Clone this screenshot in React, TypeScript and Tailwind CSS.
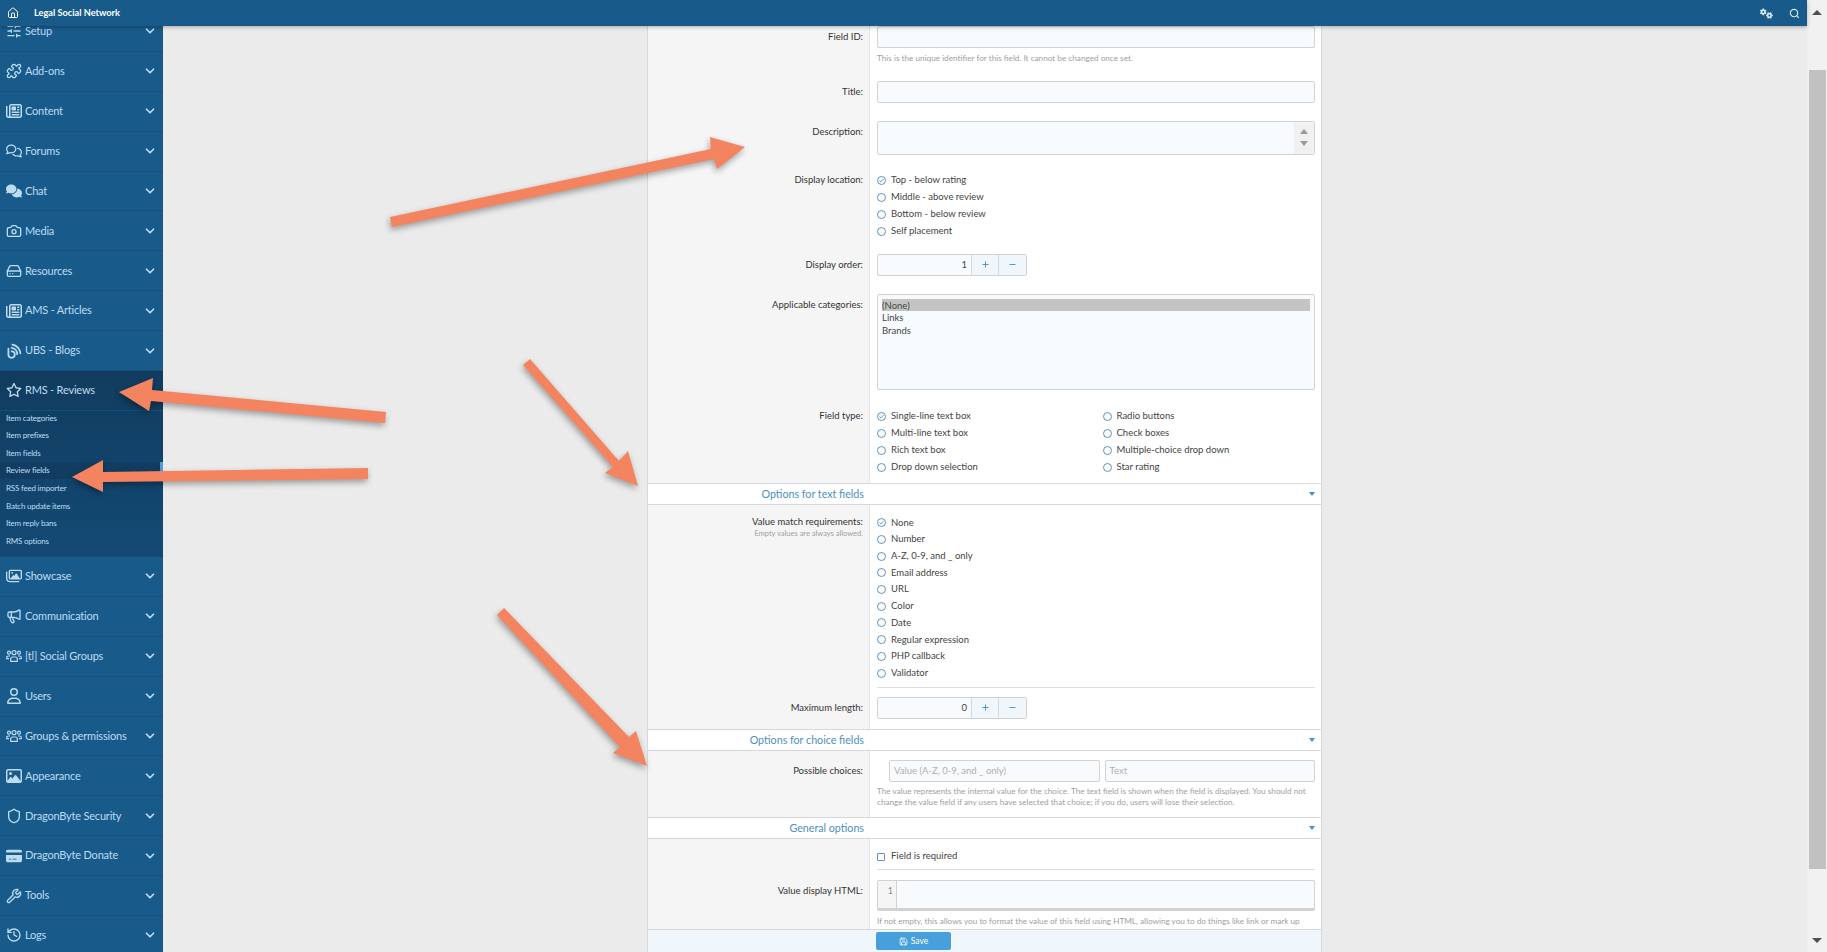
import type { ReactNode } from 'react';
import {
  Camera, ChevronDown, HardDrive, History, House, Megaphone, Plus, Minus, Puzzle, Save, Search, Shield, SlidersHorizontal, Wrench,
} from 'lucide-react';
import { FaComments, FaGears, FaCreditCard, FaRegComments, FaRegImage, FaRegImages, FaRegNewspaper, FaRegStar, FaRegUser } from 'react-icons/fa6';

function GroupIcon({ className }: { className?: string }) {
  return (
    <svg viewBox="0 0 24 20" className={className} fill="none" stroke="currentColor" strokeWidth="1.8">
      <circle cx="12" cy="5" r="3" />
      <circle cx="4.5" cy="5" r="2.2" />
      <circle cx="19.5" cy="5" r="2.2" />
      <path d="M7 18v-3.5a3 3 0 0 1 3-3h4a3 3 0 0 1 3 3V18z" />
      <path d="M4.5 14H1v-1.5A2.5 2.5 0 0 1 3.5 10H6M19.5 14H23v-1.5A2.5 2.5 0 0 0 20.5 10H18" />
    </svg>
  );
}

function BlogIcon({ className }: { className?: string }) {
  return (
    <svg viewBox="0 0 20 20" className={className} fill="none" stroke="currentColor" strokeWidth="2.2" strokeLinecap="round">
      <path d="M3 7v7.5a4 4 0 1 0 4-4" />
      <path d="M7 6a8 8 0 0 1 7 8" />
      <path d="M8 2a12 12 0 0 1 10 11" />
    </svg>
  );
}

const iconCls = 'w-[16px] h-[16px]';

const topItems: { label: string; icon: ReactNode }[] = [
  { label: 'Setup', icon: <SlidersHorizontal className={iconCls} /> },
  { label: 'Add-ons', icon: <Puzzle className={iconCls} /> },
  { label: 'Content', icon: <FaRegNewspaper className={iconCls} /> },
  { label: 'Forums', icon: <FaRegComments className={iconCls} /> },
  { label: 'Chat', icon: <FaComments className={iconCls} /> },
  { label: 'Media', icon: <Camera className={iconCls} /> },
  { label: 'Resources', icon: <HardDrive className={iconCls} /> },
  { label: 'AMS - Articles', icon: <FaRegNewspaper className={iconCls} /> },
  { label: 'UBS - Blogs', icon: <BlogIcon className={iconCls} /> },
];

const bottomItems: { label: string; icon: ReactNode }[] = [
  { label: 'Showcase', icon: <FaRegImages className={iconCls} /> },
  { label: 'Communication', icon: <Megaphone className={iconCls} /> },
  { label: '[tl] Social Groups', icon: <GroupIcon className={iconCls} /> },
  { label: 'Users', icon: <FaRegUser className={iconCls} /> },
  { label: 'Groups & permissions', icon: <GroupIcon className={iconCls} /> },
  { label: 'Appearance', icon: <FaRegImage className={iconCls} /> },
  { label: 'DragonByte Security', icon: <Shield className={iconCls} /> },
  { label: 'DragonByte Donate', icon: <FaCreditCard className={iconCls} /> },
  { label: 'Tools', icon: <Wrench className={iconCls} /> },
  { label: 'Logs', icon: <History className={iconCls} /> },
];

const subItems = ['Item categories', 'Item prefixes', 'Item fields', 'Review fields', 'RSS feed importer', 'Batch update items', 'Item reply bans', 'RMS options'];
const matchTypes = ['Number', 'A-Z, 0-9, and _ only', 'Email address', 'URL', 'Color', 'Date', 'Regular expression', 'PHP callback', 'Validator'];

function NavRow({ label, icon, chevron = true }: { label: string; icon: ReactNode; chevron?: boolean }) {
  return (
    <div className="h-[39.9px] shrink-0 flex items-center pl-[6px] pr-[6px] border-b border-[#14507c] text-[#bcdcf2]">
      <span className="w-[16px] flex justify-center">{icon}</span>
      <span className="ml-[3px] flex-1 text-[11px] tracking-[-0.2px] whitespace-nowrap">{label}</span>
      {chevron && <ChevronDown className="w-[14px] h-[14px]" strokeWidth={3} />}
    </div>
  );
}

function Sidebar() {
  return (
    <nav className="w-[163px] shrink-0 bg-[#185b8b] overflow-hidden">
      <div className="mt-[-14px] flex flex-col">
        {topItems.map(i => <NavRow key={i.label} {...i} />)}
        <div className="h-[186px] shrink-0 bg-gradient-to-b from-[#113c5f] to-[#134a75]">
          <NavRow label="RMS - Reviews" icon={<FaRegStar className={iconCls} />} chevron={false} />
          <div className="mt-[-2px]">
            {subItems.map(s => (
              <div key={s} className={`relative h-[17.6px] flex items-center pl-[6px] text-[8px] tracking-[-0.2px] text-[#bcdcf2] ${s === 'Review fields' ? 'bg-[#123d60]' : ''}`}>
                {s}
                {s === 'Review fields' && <span className="absolute right-0 top-0 bottom-0 w-[3px] bg-[#4d9fdc]" />}
              </div>
            ))}
          </div>
        </div>
        {bottomItems.map(i => <NavRow key={i.label} {...i} />)}
      </div>
    </nav>
  );
}

function Row({ label, sub, height, labelTop, children }: { label: string; sub?: string; height: string; labelTop: string; children: ReactNode }) {
  return (
    <div className={`flex shrink-0 ${height}`}>
      <div className={`w-[222px] shrink-0 bg-[#f5f5f5] border-r border-[#e3e3e3] pr-[6px] text-right text-[9.5px] leading-[14px] text-[#333] ${labelTop}`}>
        <div>{label}</div>
        {sub && <div className="text-[7.5px] leading-[10px] text-[#a0a0a0]">{sub}</div>}
      </div>
      <div className="flex-1 min-w-0 pl-[7px] pr-[6px] relative">{children}</div>
    </div>
  );
}

function Radio({ label, checked, tight }: { label: string; checked?: boolean; tight?: boolean }) {
  return (
    <div className={`${tight ? 'h-[16.7px]' : 'h-[17px]'} flex items-center text-[9.5px] text-[#444] whitespace-nowrap`}>
      <span className="w-[9px] h-[9px] rounded-full border border-[#5b93bd] mr-[5px] flex items-center justify-center">
        {checked && (
          <svg viewBox="0 0 10 10" className="w-[7px] h-[7px]" fill="none" stroke="#5b93bd" strokeWidth="1.4">
            <path d="M2 5l2 2 4-4" />
          </svg>
        )}
      </span>
      {label}
    </div>
  );
}

function Section({ title }: { title: string }) {
  return (
    <div className="h-[22px] shrink-0 bg-white border-y border-[#d8d8d8] flex items-center">
      <div className="w-[222px] shrink-0 pr-[6px] text-right text-[10.7px] text-[#4c8fc2] whitespace-nowrap">{title}</div>
      <div className="flex-1 flex justify-end pr-[6px]">
        <span className="w-0 h-0 border-x-[3px] border-t-[4px] border-x-transparent border-t-[#4c8fc2]" />
      </div>
    </div>
  );
}

const inputCls = 'h-[21.5px] w-full bg-[#f8fbfe] border border-[#d2d2d2] rounded-[2px]';

function Stepper({ value }: { value: string }) {
  return (
    <div className="flex h-[21.5px] w-[150px] bg-[#f8fbfe] border border-[#d2d2d2] rounded-[2px] text-[#4c8fc2]">
      <div className="flex-1 flex items-center justify-end pr-[4px] text-[9.5px] text-[#444] border-r border-[#d8d8d8]">{value}</div>
      <div className="w-[27px] bg-[#f0f7fc] flex items-center justify-center border-r border-[#d8d8d8]"><Plus className="w-[9px] h-[9px]" strokeWidth={2.5} /></div>
      <div className="w-[27px] bg-[#f0f7fc] flex items-center justify-center"><Minus className="w-[9px] h-[9px]" strokeWidth={2.5} /></div>
    </div>
  );
}

function Form() {
  return (
    <div className="ml-[484px] w-[675px] h-full flex flex-col border-x border-[#d8d8d8] bg-white">
      <div className="flex-1 min-h-0 overflow-hidden">
        <div className="mt-[-10px] flex flex-col">
          <Row label="Field ID:" height="h-[55px]" labelTop="pt-[14px]">
            <div className="pt-[10px]"><div className={inputCls} /></div>
            <p className="mt-[4px] text-[8.2px] leading-[12px] text-[#a0a0a0]">This is the unique identifier for this field. It cannot be changed once set.</p>
          </Row>
          <Row label="Title:" height="h-[41px]" labelTop="pt-[14px]">
            <div className="pt-[10px]"><div className={inputCls} /></div>
          </Row>
          <Row label="Description:" height="h-[52px]" labelTop="pt-[13px]">
            <div className="pt-[9px]">
              <div className="h-[33.5px] flex bg-[#f8fbfe] border border-[#d2d2d2] rounded-[2px]">
                <div className="flex-1" />
                <div className="w-[20px] bg-[#f1f1f1] flex flex-col items-center justify-center gap-[7px]">
                  <span className="w-0 h-0 border-x-[4px] border-b-[5px] border-x-transparent border-b-[#9b9b9b]" />
                  <span className="w-0 h-0 border-x-[4px] border-t-[5px] border-x-transparent border-t-[#9b9b9b]" />
                </div>
              </div>
            </div>
          </Row>
          <Row label="Display location:" height="h-[80px]" labelTop="pt-[9px]">
            <div className="pt-[8px]">
              <Radio label="Top - below rating" checked />
              <Radio label="Middle - above review" />
              <Radio label="Bottom - below review" />
              <Radio label="Self placement" />
            </div>
          </Row>
          <Row label="Display order:" height="h-[41px]" labelTop="pt-[14px]">
            <div className="pt-[10px]"><Stepper value="1" /></div>
          </Row>
          <Row label="Applicable categories:" height="h-[115px]" labelTop="pt-[13px]">
            <div className="pt-[9px]">
              <div className="h-[96px] bg-[#f8fbfe] border border-[#d2d2d2] rounded-[2px] px-[4px] pt-[4px] text-[9.5px] text-[#444] leading-[12.5px]">
                <div className="bg-[#c4c4c4] h-[12px] leading-[13px]">(None)</div>
                <div className="mt-[1px]">Links</div>
                <div>Brands</div>
              </div>
            </div>
          </Row>
          <Row label="Field type:" height="h-[83px]" labelTop="pt-[9px]">
            <div className="pt-[8px] grid grid-cols-2 gap-x-[13px]">
              <div>
                <Radio label="Single-line text box" checked />
                <Radio label="Multi-line text box" />
                <Radio label="Rich text box" />
                <Radio label="Drop down selection" />
              </div>
              <div>
                <Radio label="Radio buttons" />
                <Radio label="Check boxes" />
                <Radio label="Multiple-choice drop down" />
                <Radio label="Star rating" />
              </div>
            </div>
          </Row>
          <Section title="Options for text fields" />
          <Row label="Value match requirements:" sub="Empty values are always allowed." height="h-[182px]" labelTop="pt-[10px]">
            <div className="pt-[9.5px] pb-[6px] border-b border-[#dedede]">
              <Radio label="None" checked tight />
              {matchTypes.map(l => <Radio key={l} label={l} tight />)}
            </div>
          </Row>
          <Row label="Maximum length:" height="h-[42px]" labelTop="pt-[14px]">
            <div className="pt-[10px]"><Stepper value="0" /></div>
          </Row>
          <Section title="Options for choice fields" />
          <Row label="Possible choices:" height="h-[66px]" labelTop="pt-[13px]">
            <div className="pt-[9px] pl-[12px] flex gap-[5px]">
              <div className="flex-1 h-[21.5px] bg-[#f8fbfe] border border-[#d2d2d2] rounded-[2px] px-[4px] flex items-center text-[9.5px] text-[#b0b0b0]">Value (A-Z, 0-9, and _ only)</div>
              <div className="flex-1 h-[21.5px] bg-[#f8fbfe] border border-[#d2d2d2] rounded-[2px] px-[4px] flex items-center text-[9.5px] text-[#b0b0b0]">Text</div>
            </div>
            <p className="mt-[4px] text-[8.2px] leading-[11px] text-[#a0a0a0]">The value represents the internal value for the choice. The text field is shown when the field is displayed. You should not change the value field if any users have selected that choice; if you do, users will lose their selection.</p>
          </Row>
          <Section title="General options" />
          <Row label="" height="h-[31px]" labelTop="pt-[10px]">
            <div className="h-full flex items-center border-b border-[#dedede] pt-[5px] text-[9.5px] text-[#444]">
              <span className="w-[8px] h-[8px] border border-[#5b93bd] rounded-[1px] mr-[6px]" />
              Field is required
            </div>
          </Row>
          <Row label="Value display HTML:" height="h-[90px]" labelTop="pt-[14px]">
            <div className="pt-[10px]">
              <div className="h-[31px] flex bg-[#f8fbfe] border border-[#d2d2d2] rounded-[2px] border-b-[3px]">
                <div className="w-[19px] bg-[#f5f5f5] border-r border-[#d2d2d2] text-right pr-[3px] text-[9px] leading-[20px] text-[#888]">1</div>
              </div>
            </div>
            <p className="mt-[4px] text-[8.2px] leading-[12px] text-[#a0a0a0] whitespace-nowrap">If not empty, this allows you to format the value of this field using HTML, allowing you to do things like link or mark up</p>
          </Row>
        </div>
      </div>
      <div className="h-[23px] shrink-0 bg-[#f0f7fc] border-t border-[#d8d8d8] pl-[228px] pt-[2px]">
        <div className="w-[75px] h-[18px] bg-[#47a0dc] rounded-[2px] flex items-center justify-center gap-[3px] text-[8.5px] text-white">
          <Save className="w-[9px] h-[9px]" />
          Save
        </div>
      </div>
    </div>
  );
}

function Scrollbar() {
  return (
    <div className="w-[20px] shrink-0 bg-[#f1f1f1] flex flex-col items-center">
      <div className="h-[24px] flex items-center justify-center shrink-0">
        <span className="w-0 h-0 border-x-[5px] border-b-[5px] border-x-transparent border-b-[#505050]" />
      </div>
      <div className="h-[46px] shrink-0" />
      <div className="h-[799px] w-[17px] shrink-0 bg-[#c1c1c1]" />
      <div className="flex-1" />
      <div className="h-[24px] flex items-center justify-center shrink-0">
        <span className="w-0 h-0 border-x-[5px] border-t-[5px] border-x-transparent border-t-[#505050]" />
      </div>
    </div>
  );
}

// screenshot annotations drawn on top of the page
function Arrows() {
  const shapes = [
    '390,217 711,149 710,137 745,147 717,169 714,159 392,227',
    '530,359 619,461 628,451 638,486 605,473 613,467 523,365',
    '386,412 152,390 153,378 119,392 149,411 151,401 385,423',
    '368,468 103,472 103,460 72,477 103,492 103,482 368,479',
    '504,608 629,737 636,731 647,766 613,753 620,747 497,615',
  ];
  return (
    <svg className="absolute inset-0 z-20 pointer-events-none drop-shadow-[-1px_3px_3px_rgba(0,0,0,0.35)]" width="1827" height="952">
      {shapes.map(p => <polygon key={p} points={p} fill="#f4845f" />)}
    </svg>
  );
}

export default function App() {
  return (
    <div className="relative flex h-screen w-full overflow-hidden bg-[#ebebeb] font-['Lato',sans-serif]">
      <div className="flex-1 min-w-0 flex flex-col">
        <header className="relative z-10 h-[26px] shrink-0 bg-[#185b8b] shadow-[0_1px_4px_rgba(0,0,0,0.3)] flex items-center pl-[7px] pr-[7px] text-white">
          <House className="w-[12px] h-[12px]" />
          <span className="ml-[15px] flex-1 text-[9.2px] font-bold">Legal Social Network</span>
          <FaGears className="w-[13px] h-[13px] text-[#d5e7f4]" />
          <Search className="ml-[16px] w-[11px] h-[11px] text-[#d5e7f4]" strokeWidth={2.5} />
        </header>
        <div className="flex-1 min-h-0 flex">
          <Sidebar />
          <main className="flex-1 min-w-0">
            <Form />
          </main>
        </div>
      </div>
      <Scrollbar />
      <Arrows />
    </div>
  );
}
